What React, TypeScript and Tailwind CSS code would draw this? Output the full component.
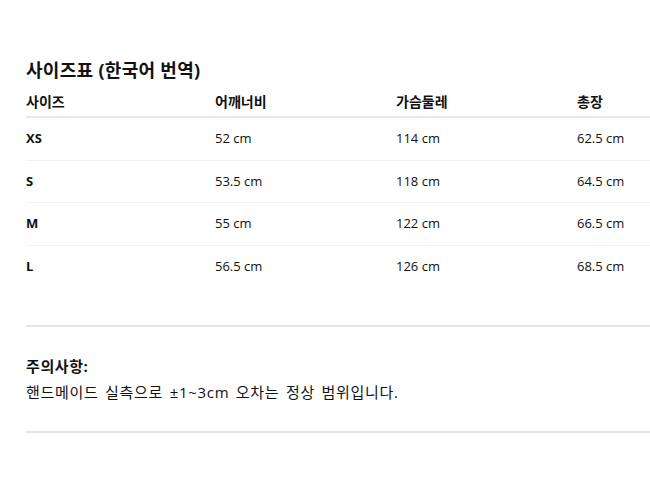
import React from 'react';

const rows = [
    { size: 'XS', shoulder: '52 cm', chest: '114 cm', length: '62.5 cm' },
    { size: 'S', shoulder: '53.5 cm', chest: '118 cm', length: '64.5 cm' },
    { size: 'M', shoulder: '55 cm', chest: '122 cm', length: '66.5 cm' },
    { size: 'L', shoulder: '56.5 cm', chest: '126 cm', length: '68.5 cm' },
];

export default function App() {
    return (
        <div
            className="min-h-screen bg-white pl-[26px] pt-[57px] text-[#111]"
            style={{ fontFamily: '"Open Sans", "Noto Sans CJK KR", sans-serif' }}
        >
            {/* Title */}
            <h2 className="h-[26px] text-[18px] leading-[26px] font-bold tracking-[0.3px]">사이즈표 (한국어 번역)</h2>

            {/* Size table */}
            <div className="mt-[4px]">
                <div className="grid h-[31px] grid-cols-[189px_181px_181px_1fr] items-center border-b-2 border-[#e8e8e8] text-[14px] font-bold">
                    <span>사이즈</span>
                    <span>어깨너비</span>
                    <span>가슴둘레</span>
                    <span>총장</span>
                </div>
                {rows.map((r) => (
                    <div
                        key={r.size}
                        className="grid h-[42.5px] grid-cols-[189px_181px_181px_1fr] items-center border-b border-[#f1f1f1] text-[13px] last:border-b-0"
                    >
                        <span className="font-bold">{r.size}</span>
                        <span>{r.shoulder}</span>
                        <span>{r.chest}</span>
                        <span>{r.length}</span>
                    </div>
                ))}
            </div>

            {/* Notes */}
            <div className="mt-[37px] border-t-2 border-[#e6e6e6] pt-[26px] pb-[26px]">
                <p className="text-[15px] leading-[26px] font-bold tracking-[0.6px]">주의사항:</p>
                <p className="text-[15px] leading-[26px] tracking-[0.7px] [word-spacing:2px]">핸드메이드 실측으로 ±1~3cm 오차는 정상 범위입니다.</p>
            </div>
            <div className="border-t-2 border-[#e6e6e6]" />
        </div>
    );
}
